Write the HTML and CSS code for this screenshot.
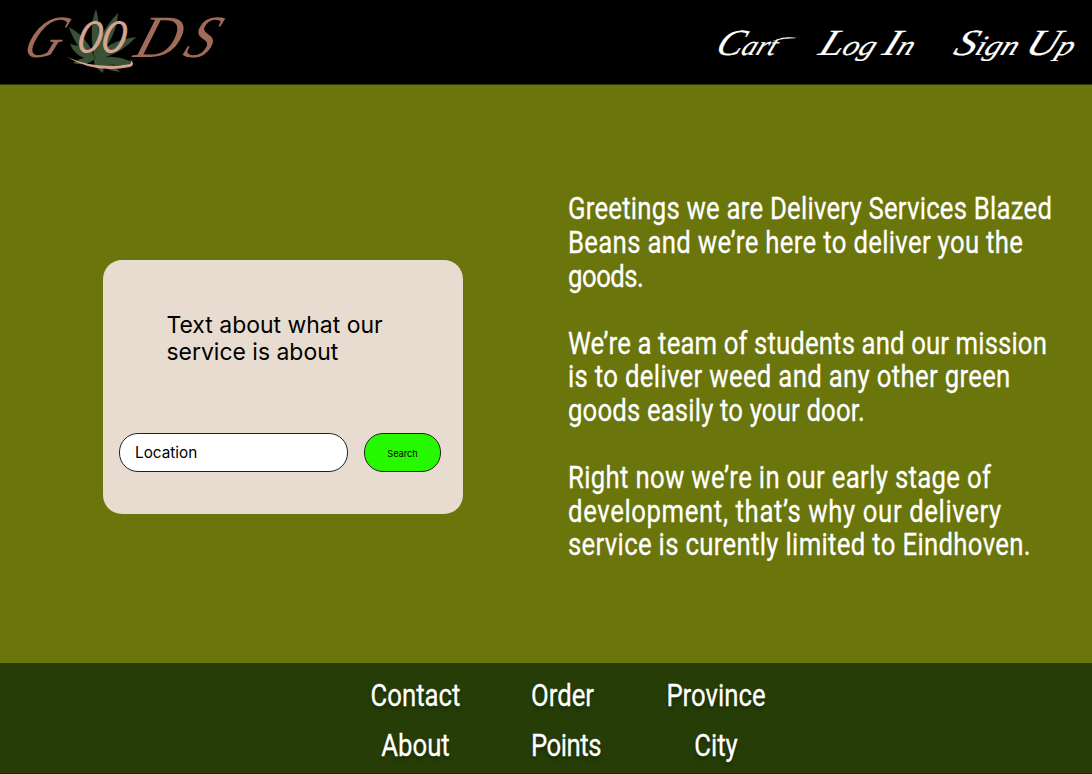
FILE: index.html
```html
<!DOCTYPE html>
<html lang="en">
<head>
<meta charset="utf-8">
<title>Goods</title>
<link rel="stylesheet" href="styles.css">
</head>
<body>
<header class="header">
  <svg class="logo" viewBox="0 0 250 84" role="img" aria-label="Goods">
    <g class="leaf">
      <path d="M95 60Q88 30 96 9Q102 29 95 60Z"/>
      <path d="M95 60Q98 33 118 13Q117 38 95 60Z"/>
      <path d="M95 60Q76 50 69 27Q90 39 95 60Z"/>
      <path d="M95 60Q105 41 136 37Q120 55 95 60Z"/>
      <path d="M95 60Q76 59 70 44Q86 46 95 60Z"/>
      <path d="M95 59Q116 53 133 63Q113 69 95 59Z"/>
      <path d="M95 59Q84 55 73 63Q85 67 95 59Z"/>
      <path d="M95 58Q113 63 120 72Q101 70 95 58Z"/>
      <path d="M95 58Q91 65 103 73Q106 65 95 58Z"/>
    </g>
    <text class="mark" transform="translate(20 57) skewX(-25)" textLength="36" lengthAdjust="spacingAndGlyphs">G</text>
    <text class="mark mark-small" transform="translate(76 52) skewX(-10)" textLength="48" lengthAdjust="spacingAndGlyphs">OO</text>
    <text class="mark" transform="translate(132 57) skewX(-18)" textLength="44" lengthAdjust="spacingAndGlyphs">D</text>
    <text class="mark" transform="translate(181 57) skewX(-24)" textLength="28" lengthAdjust="spacingAndGlyphs">S</text>
    <path class="swoosh" d="M67 57Q96 70 130 64Q132 62 130 59Q136 65 130 67Q95 74 67 57Z"/>
  </svg>
  <nav class="nav">
    <svg class="cart" viewBox="0 0 82 50"><text transform="translate(-2 35) skewX(-22)" textLength="60" lengthAdjust="spacingAndGlyphs">C<tspan class="low">art</tspan></text><path d="M60 20Q68 16 80 18Q68 18 57 21Z"/></svg>
    <svg class="login" viewBox="0 0 104 50"><text transform="translate(2 35) skewX(-22)" textLength="94" lengthAdjust="spacingAndGlyphs">L<tspan class="low">og </tspan>I<tspan class="low">n</tspan></text></svg>
    <svg class="signup" viewBox="0 0 126 50"><text transform="translate(0 35) skewX(-22)" textLength="119" lengthAdjust="spacingAndGlyphs">S<tspan class="low">ign </tspan>U<tspan class="low">p</tspan></text></svg>
  </nav>
</header>
<main class="main">
  <section class="card">
    <p class="intro">Text about what our<br>service is about</p>
    <form class="search">
      <div class="field">Location</div>
      <button class="button" type="button">Search</button>
    </form>
  </section>
  <section class="copy">
    <p><span class="t3">Greetings we are Delivery Services Blazed</span><br><span class="t4">Beans and we’re here to deliver you the</span><br><span class="t0">goods.</span></p>
    <p><span class="t1">We’re a team of students and our mission</span><br><span class="t4">is to deliver weed and any other green</span><br><span class="t2">goods easily to your door.</span></p>
    <p><span class="t4">Right now we’re in our early stage of</span><br><span class="t5">development, that’s why our delivery</span><br><span class="t4">service is curently limited to Eindhoven.</span></p>
  </section>
</main>
<footer class="footer">
  <div class="links contact"><a>Contact</a><a>About</a></div>
  <div class="links order"><a>Order</a><a class="points">Points</a></div>
  <div class="links place"><a>Province</a><a>City</a></div>
</footer>
</body>
</html>
```
FILE: styles.css
```css
* { box-sizing: border-box; }
body { margin: 0; width: 1092px; height: 774px; overflow: hidden; background: #6a750c; display: flex; flex-direction: column; }
p { margin: 0; }
.header { height: 84px; flex: none; background: #000; display: flex; justify-content: space-between; box-shadow: 0 1px 0 #343a06; }
.logo { width: 250px; height: 84px; }
.leaf { fill: #3b5135; }
.mark { font: italic 60px "Liberation Serif", serif; fill: #a06c59; }
.mark-small { font-size: 46px; fill: #d3a592; stroke: #d3a592; stroke-width: 1; }
.swoosh { fill: #d3a592; }
.nav { display: flex; padding: 20px 14px 0 0; }
.nav svg { height: 50px; flex: none; overflow: visible; fill: #fff; stroke: #fff; stroke-width: .2px; font: italic 37px "Liberation Serif", serif; }
.nav .low { font-size: 28px; }
.cart { width: 82px; margin-right: 17px; }
.login { width: 104px; margin-right: 33px; }
.signup { width: 126px; }
.main { height: 579px; flex: none; display: flex; padding-left: 103px; }
.card { width: 360px; height: 254.5px; margin-top: 175.7px; padding: 52px 22px 0 16px; border-radius: 19px; background: #e8dcd0; font-family: Inter, sans-serif; color: #000; }
.intro { margin-left: 47.5px; height: 121.7px; font-size: 22.95px; line-height: 27.5px; white-space: nowrap; }
.search { display: flex; justify-content: space-between; }
.field { width: 229px; height: 38.5px; border: 1px solid #222; border-radius: 19px; background: #fff; padding-left: 15px; font-size: 15.3px; line-height: 38px; }
.button { width: 77px; height: 38.5px; padding: 1px 0 0; border: 1px solid #222; border-radius: 19px; background: #26f900; color: #000; font: 9.2px Inter, sans-serif; }
.copy { margin: 108.4px 0 0 105px; width: 500px; color: #fff; font: 31px/33.6px Roboto, sans-serif; -webkit-text-stroke: .3px #fff; white-space: nowrap; transform: scaleX(.83); transform-origin: left; }
.copy p { margin-bottom: 33.6px; }
.t0 { letter-spacing: -.6px; }
.t1 { letter-spacing: .15px; }
.t2 { letter-spacing: .19px; }
.t3 { letter-spacing: .27px; }
.t4 { letter-spacing: .38px; }
.t5 { letter-spacing: .74px; }
.footer { height: 111px; flex: none; background: #263d07; border-bottom: 1px solid #1a2b05; display: flex; padding: 8px 0 0 370px; color: #fff; font: 31px/50.3px Roboto, sans-serif; -webkit-text-stroke: .3px #fff; text-shadow: 0 3px 4px rgba(0,0,0,.35); }
.links { display: flex; flex-direction: column; transform: scaleX(.83); }
.contact { width: 91px; align-items: center; }
.order { width: 70px; margin-left: 70px; align-items: flex-start; transform-origin: left; }
.points { letter-spacing: -.6px; }
.place { width: 100px; margin-left: 64.5px; align-items: center; }
```
